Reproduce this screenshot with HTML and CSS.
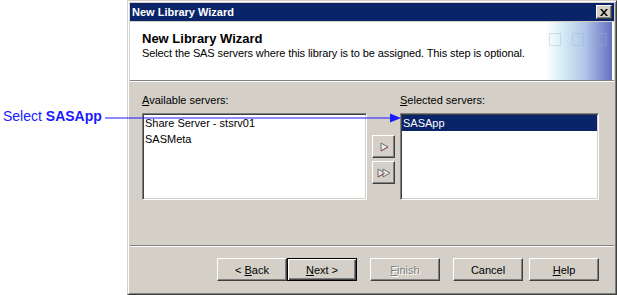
FILE: index.html
```html
<!DOCTYPE html>
<html lang="en">
<head>
    <meta charset="UTF-8">
    <title>New Library Wizard</title>
    <link rel="stylesheet" href="styles.css">
</head>
<body>
    <div class="screen">
        <div class="callout">
            <span>Select <b>SASApp</b></span>
        </div>

        <div class="window">
            <div class="titlebar">
                <span>New Library Wizard</span>
                <span class="close">
                    <svg width="8" height="7" viewBox="0 0 8 7"><path d="M0 0h2l2 2.5L6 0h2L5 3.5 8 7H6L4 4.5 2 7H0l3-3.5z" fill="#000"/></svg>
                </span>
            </div>

            <div class="header">
                <div class="header-text">
                    <h1>New Library Wizard</h1>
                    <p>Select the SAS servers where this library is to be assigned. This step is optional.</p>
                </div>
                <div class="header-art">
                    <span class="sq"></span><span class="sq"></span><span class="sq"></span>
                </div>
            </div>

            <div class="content">
                <div class="col col-left">
                    <div class="label"><u>A</u>vailable servers:</div>
                    <div class="listbox">
                        <div class="item">Share Server - stsrv01</div>
                        <div class="item">SASMeta</div>
                    </div>
                </div>
                <div class="movers">
                    <span class="btn mover">
                        <svg width="10" height="10" viewBox="0 0 10 10"><path d="M2 1l7 4-7 4z" fill="#e8e8e8" stroke="#707070"/><path d="M2 9l7-4" stroke="#a04040" stroke-width="0.8"/></svg>
                    </span>
                    <span class="btn mover">
                        <svg width="16" height="10" viewBox="0 0 16 10"><path d="M2 1l7 4-7 4z" fill="#e8e8e8" stroke="#707070"/><path d="M7 1l7 4-7 4z" fill="#e8e8e8" stroke="#707070"/><path d="M2 9l7-4" stroke="#a04040" stroke-width="0.8"/></svg>
                    </span>
                </div>
                <div class="col col-right">
                    <div class="label"><u>S</u>elected servers:</div>
                    <div class="listbox">
                        <div class="item selected">SASApp</div>
                    </div>
                </div>
            </div>

            <div class="footer">
                <span class="btn"><span>&lt; <u>B</u>ack</span></span>
                <span class="btn default"><span><u>N</u>ext &gt;</span></span>
                <span class="btn disabled gap"><span><u>F</u>inish</span></span>
                <span class="btn gap">Cancel</span>
                <span class="btn gap-small"><span><u>H</u>elp</span></span>
            </div>
        </div>

        <!-- callout arrow drawn over the dialog -->
        <svg class="pointer" width="300" height="12" viewBox="0 0 300 12">
            <line x1="0" y1="6" x2="288" y2="6" stroke="#1a1aff" stroke-width="1.2"/>
            <path d="M285 1.5L296 6 285 10.5z" fill="#1a1aff"/>
        </svg>
    </div>
</body>
</html>
```

FILE: styles.css
```css
body {
    margin: 0;
    background: #fff;
    font-family: Tahoma, "Liberation Sans", sans-serif;
    font-size: 11px;
    color: #000;
}
.screen {
    position: relative;
    display: flex;
    width: 617px;
    height: 295px;
}
.callout {
    width: 127px;
    padding-top: 108px;
    padding-left: 3px;
    box-sizing: border-box;
    font-family: "Liberation Sans", Arial, sans-serif;
    font-size: 14px;
    color: #1a1aff;
}
.pointer {
    position: absolute;
    left: 105px;
    top: 112px;
}
.window {
    flex: 1;
    display: flex;
    flex-direction: column;
    background: #d4d0c8;
    border: 1px solid;
    border-color: #d4d0c8 #404040 #404040 #d4d0c8;
    box-shadow: inset 1px 1px #fff, inset -1px -1px #808080;
    padding: 2px 2px 2px 2px;
}
.titlebar {
    height: 18px;
    display: flex;
    align-items: center;
    justify-content: space-between;
    background: #0a246a;
    color: #fff;
    font-weight: bold;
    padding: 0 2px 0 2px;
}
.close {
    width: 14px;
    height: 12px;
    display: flex;
    align-items: center;
    justify-content: center;
    background: #d4d0c8;
    border: 1px solid;
    border-color: #fff #404040 #404040 #fff;
    box-shadow: inset -1px -1px #808080;
}
.header {
    margin-top: 1px;
    height: 58px;
    display: flex;
    justify-content: space-between;
    background: #fff;
    border-bottom: 1px solid #808080;
    box-shadow: 0 1px #fff;
}
.header-text {
    padding: 9px 0 0 12px;
}
.header-text h1 {
    margin: 0;
    font-size: 13px;
    font-weight: bold;
    line-height: 15px;
}
.header-text p {
    margin: 1px 0 0 0;
    line-height: 13px;
    letter-spacing: -0.1px;
}
.header-art {
    width: 67px;
    margin-right: 2px;
    display: flex;
    gap: 11px;
    padding: 11px 0 0 4px;
    box-sizing: border-box;
    background: linear-gradient(90deg, #ffffff 0%, #d6eef6 25%, #b0c4e6 60%, #7c8ace 88%, #6472bc 100%);
}
.sq {
    width: 10px;
    height: 11px;
    border: 1px solid rgba(150, 180, 210, 0.35);
}
.content {
    height: 161px;
    margin-top: 1px;
    display: flex;
    padding: 12px 0 0 12px;
    box-sizing: border-box;
}
.label {
    line-height: 13px;
    margin-bottom: 6px;
}
.listbox {
    height: 87px;
    box-sizing: border-box;
    background: #fff;
    border: 1px solid;
    border-color: #808080 #fff #fff #808080;
    box-shadow: inset 1px 1px #404040, inset -1px -1px #d4d0c8;
    padding: 1px;
}
.col-left .listbox {
    width: 225px;
}
.col-right .listbox {
    width: 199px;
}
.item {
    height: 16px;
    line-height: 16px;
    padding-left: 1px;
    white-space: nowrap;
}
.item.selected {
    background: #0a246a;
    color: #fff;
}
.movers {
    display: flex;
    flex-direction: column;
    gap: 3px;
    padding: 22px 5px 0 5px;
    margin-top: 19px;
}
.btn {
    width: 70px;
    height: 23px;
    box-sizing: border-box;
    display: flex;
    align-items: center;
    justify-content: center;
    background: #d4d0c8;
    border: 1px solid;
    border-color: #fff #404040 #404040 #fff;
    box-shadow: inset -1px -1px #808080;
}
.btn.mover {
    width: 23px;
}
.btn.default {
    border: 1px solid #000;
    box-shadow: inset 1px 1px #fff, inset -1px -1px #404040, inset -2px -2px #808080;
}
.btn.disabled {
    color: #808080;
    text-shadow: 1px 1px #fff;
}
.btn.gap {
    margin-left: 13px;
}
.btn.gap-small {
    margin-left: 6px;
}
.footer {
    flex: 1;
    display: flex;
    justify-content: flex-end;
    align-items: flex-start;
    padding: 12px 15px 0 0;
    margin-top: 2px;
    border-top: 1px solid #808080;
    box-shadow: inset 0 1px #fff;
}
u {
    text-decoration: underline;
}
```
